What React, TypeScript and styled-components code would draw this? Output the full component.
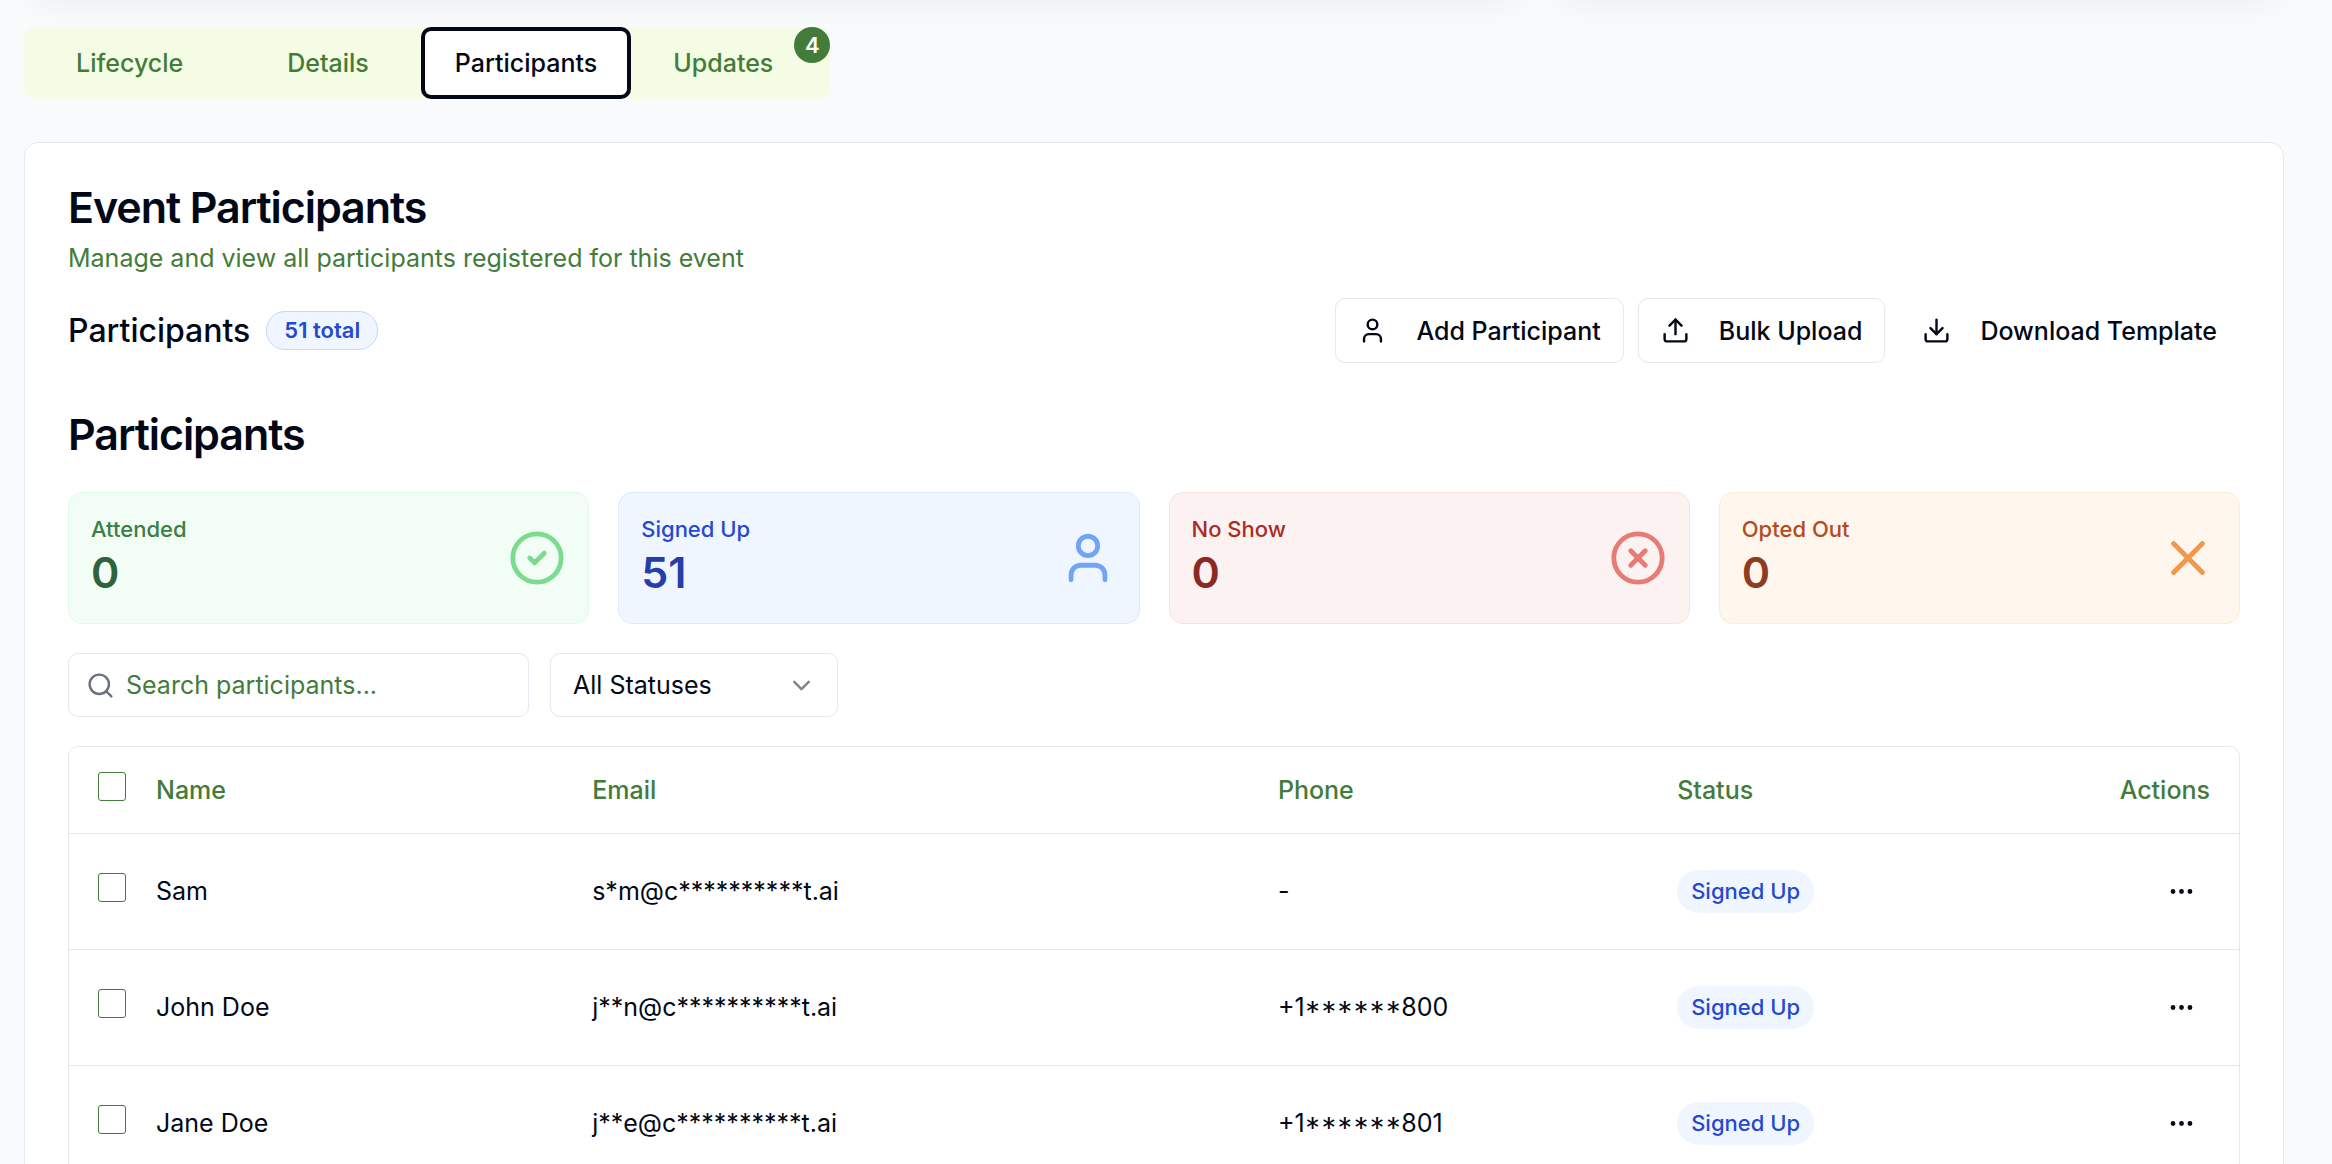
import React from "react";
import styled, { createGlobalStyle } from "styled-components";
import {
  User,
  Upload,
  Download,
  CircleCheck,
  CircleX,
  X,
  Search,
  ChevronDown,
  Ellipsis,
} from "lucide-react";

const color = {
  page: "#f9fafc",
  ink: "#020817",
  green: "#437c3a",
  line: "#e2e8f0",
  blue: "#2549d0",
};

const GlobalStyle = createGlobalStyle`
  *, *::before, *::after { box-sizing: border-box; }
  body {
    margin: 0;
    background: ${color.page};
    color: ${color.ink};
    font-family: Inter, "Liberation Sans", sans-serif;
    font-size: 25px;
    line-height: 36px;
  }
  button, input, select { font: inherit; color: inherit; }
  h2, h3, p { margin: 0; }
`;

const Page = styled.main`
  height: 100vh;
  overflow: hidden;
  padding: 0 48px 0 24px;
`;

const SummaryStrip = styled.div`
  display: grid;
  grid-template-columns: 1500fr 731fr;
  gap: 29px;
  margin-top: -40px;
  margin-bottom: 43px;
`;

const SummaryCard = styled.section`
  height: 24px;
  border-radius: 14px;
  background: #fff;
  box-shadow: 0 20px 30px -6px rgba(0, 0, 0, 0.1), 0 8px 12px -8px rgba(0, 0, 0, 0.1);
`;

const TabList = styled.div`
  display: inline-flex;
  height: 72px;
  border-radius: 12px;
  background: #f4fce3;
  margin-bottom: 43px;
`;

const Tab = styled.button<{ $active?: boolean }>`
  position: relative;
  padding: 0 ${(p) => (p.$active ? 30 : 52)}px;
  border: ${(p) => (p.$active ? `4px solid ${color.ink}` : "0")};
  border-radius: 10px;
  background: ${(p) => (p.$active ? "#fff" : "transparent")};
  color: ${(p) => (p.$active ? color.ink : color.green)};
  font-weight: 500;

  &:last-child {
    padding: 0 57px 0 42px;
  }
`;

const TabCount = styled.span`
  position: absolute;
  top: 0;
  right: 0;
  width: 36px;
  height: 36px;
  border-radius: 50%;
  background: ${color.green};
  color: #fff;
  font-size: 22px;
  font-weight: 600;
`;

const Panel = styled.section`
  padding: 43px;
  border: 1px solid ${color.line};
  border-radius: 14px;
  background: #fff;
`;

const Title = styled.h2`
  font-size: 43px;
  line-height: 43px;
  font-weight: 600;
  letter-spacing: -0.025em;
`;

const Subtitle = styled.p`
  margin-top: 11px;
  color: ${color.green};
`;

const Toolbar = styled.div`
  display: flex;
  align-items: center;
  justify-content: space-between;
  margin-top: 22px;
`;

const ToolbarTitle = styled.div`
  display: flex;
  align-items: center;
  gap: 16px;

  h3 {
    font-size: 32px;
    font-weight: 500;
  }
`;

const TotalBadge = styled.span`
  padding: 4px 17px;
  border: 1px solid #bfdbfe;
  border-radius: 19px;
  background: #eff6ff;
  color: ${color.blue};
  font-size: 22px;
  line-height: 29px;
  font-weight: 600;
`;

const Actions = styled.div`
  display: flex;
  gap: 14px;
`;

const ActionButton = styled.button<{ $plain?: boolean }>`
  display: flex;
  align-items: center;
  gap: 29px;
  height: 65px;
  padding: 0 22px;
  border: 1px solid ${(p) => (p.$plain ? "transparent" : color.line)};
  border-radius: 10px;
  background: #fff;
  font-weight: 500;
`;

const SectionTitle = styled(Title)`
  margin-top: 50px;
`;

const Stats = styled.div`
  display: grid;
  grid-template-columns: repeat(4, 1fr);
  gap: 29px;
  margin-top: 36px;
`;

const StatCard = styled.div<{ $bg: string; $line: string; $label: string; $value: string; $icon: string }>`
  display: flex;
  align-items: center;
  justify-content: space-between;
  padding: 22px;
  border: 1px solid ${(p) => p.$line};
  border-radius: 14px;
  background: ${(p) => p.$bg};

  p {
    color: ${(p) => p.$label};
    font-size: 22px;
    line-height: 29px;
    font-weight: 500;
  }

  strong {
    display: block;
    color: ${(p) => p.$value};
    font-size: 43px;
    line-height: 57px;
    font-weight: 600;
  }

  svg {
    color: ${(p) => p.$icon};
  }
`;

const Filters = styled.div`
  display: flex;
  gap: 21px;
  margin-top: 29px;
`;

const Field = styled.label<{ $width: number }>`
  position: relative;
  width: ${(p) => p.$width}px;
  height: 64px;

  svg {
    position: absolute;
    top: 18px;
    pointer-events: none;
  }
`;

const SearchIcon = styled(Search)`
  left: 18px;
  color: #6b7280;
`;

const SelectIcon = styled(ChevronDown)`
  right: 22px;
  color: #80838a;
`;

const SearchInput = styled.input`
  width: 100%;
  height: 100%;
  padding: 0 20px 0 57px;
  border: 1px solid ${color.line};
  border-radius: 10px;
  background: #fff;

  &::placeholder {
    color: ${color.green};
    opacity: 1;
  }
`;

const StatusSelect = styled.select`
  appearance: none;
  width: 100%;
  height: 100%;
  padding: 0 60px 0 22px;
  border: 1px solid ${color.line};
  border-radius: 10px;
  background: #fff;
`;

const TableFrame = styled.div`
  margin-top: 29px;
  border: 1px solid ${color.line};
  border-radius: 10px;
  overflow: hidden;
`;

const Table = styled.table`
  width: 100%;
  border-collapse: collapse;
  table-layout: fixed;

  th, td {
    padding: 0 29px 0 0;
    text-align: left;
    border-bottom: 1px solid ${color.line};
  }

  th {
    height: 86px;
    color: ${color.green};
    font-weight: 500;
  }

  td {
    height: 116px;
  }

  th:first-child, td:first-child {
    padding-left: 29px;
  }

  th:last-child, td:last-child {
    text-align: right;
  }
`;

const Col = styled.col<{ $width: string }>`
  width: ${(p) => p.$width};
`;

const Checkbox = styled.input.attrs({ type: "checkbox" })`
  appearance: none;
  display: block;
  width: 28px;
  height: 29px;
  margin: 0 0 7px;
  border: 1px solid ${color.green};
  border-radius: 3px;

  &:checked {
    background: ${color.green};
  }
`;

const StatusBadge = styled.span`
  display: inline-block;
  padding: 7px 14px;
  border-radius: 22px;
  background: #eff6ff;
  color: ${color.blue};
  font-size: 22px;
  line-height: 29px;
  font-weight: 500;
  vertical-align: middle;
`;

/* Cap-height punctuation keeps the mask level with the digits. */
const MaskedPhone = styled.span`
  font-feature-settings: "case";
`;

const MenuButton = styled.button`
  display: inline-flex;
  align-items: center;
  justify-content: center;
  width: 58px;
  height: 58px;
  padding: 0;
  border: 0;
  border-radius: 10px;
  background: transparent;
  vertical-align: middle;
`;

const stats = [
  { label: "Attended", value: 0, Icon: CircleCheck, bg: "#f2fdf5", line: "#dcfce7", text: "#3a7f45", num: "#2f6339", icon: "#7bdc8d" },
  { label: "Signed Up", value: 51, Icon: User, bg: "#eff6ff", line: "#dbeafe", text: "#2549d0", num: "#263ea6", icon: "#70a5f6" },
  { label: "No Show", value: 0, Icon: CircleX, bg: "#fcf2f2", line: "#fbe2e2", text: "#ab2b26", num: "#8b2a22", icon: "#e77b75" },
  { label: "Opted Out", value: 0, Icon: X, bg: "#fff7ed", line: "#fdedd3", text: "#b54a20", num: "#8f3d20", icon: "#f0984c" },
];

const people = [
  { name: "Sam", email: "s*m@c**********t.ai", phone: "" },
  { name: "John Doe", email: "j**n@c**********t.ai", phone: "+1******800" },
  { name: "Jane Doe", email: "j**e@c**********t.ai", phone: "+1******801" },
];

export default function App() {
  return (
    <>
      <GlobalStyle />
      <Page>
        <SummaryStrip>
          <SummaryCard />
          <SummaryCard />
        </SummaryStrip>

        <TabList role="tablist">
          <Tab role="tab">Lifecycle</Tab>
          <Tab role="tab">Details</Tab>
          <Tab role="tab" aria-selected $active>Participants</Tab>
          <Tab role="tab">
            Updates
            <TabCount>4</TabCount>
          </Tab>
        </TabList>

        <Panel>
          <Title>Event Participants</Title>
          <Subtitle>Manage and view all participants registered for this event</Subtitle>

          <Toolbar>
            <ToolbarTitle>
              <h3>Participants</h3>
              <TotalBadge>51 total</TotalBadge>
            </ToolbarTitle>
            <Actions>
              <ActionButton><User size={29} />Add Participant</ActionButton>
              <ActionButton><Upload size={29} />Bulk Upload</ActionButton>
              <ActionButton $plain><Download size={29} />Download Template</ActionButton>
            </Actions>
          </Toolbar>

          <SectionTitle>Participants</SectionTitle>

          <Stats>
            {stats.map(({ label, value, Icon, bg, line, text, num, icon }) => (
              <StatCard key={label} $bg={bg} $line={line} $label={text} $value={num} $icon={icon}>
                <div>
                  <p>{label}</p>
                  <strong>{value}</strong>
                </div>
                <Icon size={58} />
              </StatCard>
            ))}
          </Stats>

          <Filters>
            <Field $width={461}>
              <SearchIcon size={29} />
              <SearchInput type="text" aria-label="Search participants" placeholder="Search participants..." />
            </Field>
            <Field $width={288}>
              <StatusSelect aria-label="Status">
                <option>All Statuses</option>
              </StatusSelect>
              <SelectIcon size={29} />
            </Field>
          </Filters>

          <TableFrame>
            <Table>
              <colgroup>
                <Col $width="87px" />
                <Col $width="20.1%" />
                <Col $width="31.6%" />
                <Col $width="18.4%" />
                <Col $width="auto" />
                <Col $width="180px" />
              </colgroup>
              <thead>
                <tr>
                  <th scope="col"><Checkbox aria-label="Select all participants" /></th>
                  <th scope="col">Name</th>
                  <th scope="col">Email</th>
                  <th scope="col">Phone</th>
                  <th scope="col">Status</th>
                  <th scope="col">Actions</th>
                </tr>
              </thead>
              <tbody>
                {people.map((person) => (
                  <tr key={person.name}>
                    <td><Checkbox aria-label={`Select ${person.name}`} /></td>
                    <td>{person.name}</td>
                    <td>{person.email}</td>
                    <td>{person.phone ? <MaskedPhone>{person.phone}</MaskedPhone> : "-"}</td>
                    <td><StatusBadge>Signed Up</StatusBadge></td>
                    <td>
                      <MenuButton aria-label={`Actions for ${person.name}`}>
                        <Ellipsis size={29} />
                      </MenuButton>
                    </td>
                  </tr>
                ))}
              </tbody>
            </Table>
          </TableFrame>
        </Panel>
      </Page>
    </>
  );
}
